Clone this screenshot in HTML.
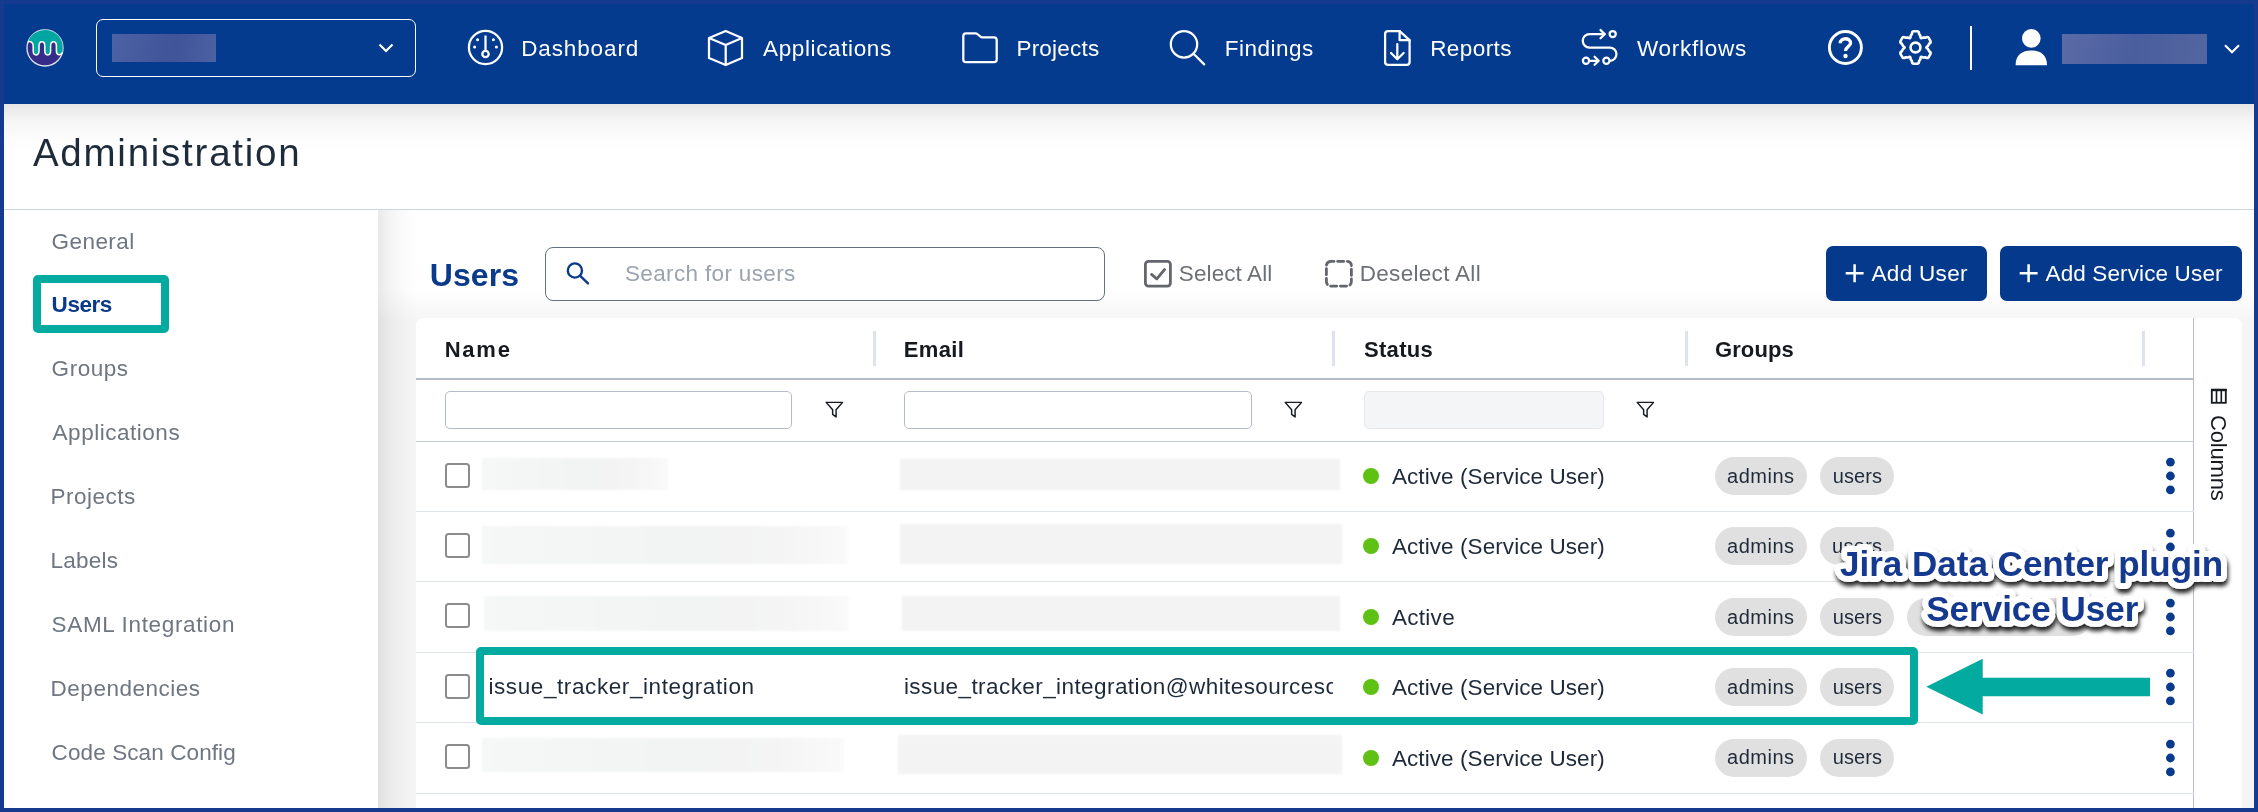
<!DOCTYPE html>
<html lang="en">
<head>
<meta charset="utf-8">
<title>Administration - Users</title>
<style>
*{box-sizing:border-box;margin:0;padding:0}
html,body{width:2258px;height:812px;overflow:hidden;background:#163a8e}
body{font-family:"Liberation Sans",sans-serif;color:#1e2a3a;position:relative}
.abs{position:absolute}
#frame{position:absolute;left:4px;top:4px;width:2250px;height:804px;background:#fff;overflow:hidden}
#nav{position:absolute;left:0;top:0;width:2250px;height:100px;background:#053b8e}
#nav svg{position:absolute;overflow:visible}
#page{position:absolute;left:-4px;top:-4px;width:2258px;height:812px;will-change:transform}
#page>div,#page>svg{position:absolute}
.tx{white-space:nowrap}
.cb{width:25px;height:25px;border:2.7px solid #8c8c8c;border-radius:3.5px;background:#fff}
.chip{height:38px;border-radius:19px;background:#e0e0e0}
.dot{width:16.4px;height:16.4px;border-radius:50%;background:#5ec113}
.sep{height:1px;background:#dfe3ee;left:416px;width:1778px}
.fin{height:38px;border:1px solid #b5bcc9;border-radius:5px;background:#fff}
.blur{background:#f3f3f4;filter:blur(1px)}
.teal{border:8px solid #02aaa0;border-radius:5px}
</style>
</head>
<body>
<div id="frame">
  <div id="nav">
    <!-- logo -->
    <svg style="left:22.2px;top:25px" width="38" height="38" viewBox="0 0 38 38">
      <circle cx="19" cy="19" r="18" fill="#352c8a" stroke="#e2e5f0" stroke-width="1.3"/>
      <path d="M2 13 A18 18 0 0 1 36.4 14.5 L36.4 22 C36.4 27.2 30.4 27.2 30.4 22 L30.4 17 C30.4 11.3 24.6 11.3 24.6 17 L24.6 22 C24.6 27.2 18.8 27.2 18.8 22 L18.8 17 C18.8 11.3 13 11.3 13 17 L13 22 C13 27.2 7.2 27.2 7.2 22 L7.2 17 C7.2 13.5 5 12 2 13 Z" fill="#00a7a2"/>
      <path d="M1.9 12.8 C5 12 7.2 13.5 7.2 17 L7.2 22 C7.2 27.2 13 27.2 13 22 L13 17 C13 11.3 18.8 11.3 18.8 17 L18.8 22 C18.8 27.2 24.6 27.2 24.6 22 L24.6 17 C24.6 11.3 30.4 11.3 30.4 17 L30.4 22 C30.4 26.5 35 27 36.3 23.5" fill="none" stroke="#fff" stroke-width="1.5"/>
    </svg>
    <!-- org dropdown -->
    <div class="abs" style="left:92px;top:15px;width:320px;height:58px;border:1.5px solid #fff;border-radius:7px"></div>
    <div class="abs" style="left:108px;top:30px;width:104px;height:28px;background:linear-gradient(100deg,#4d62a3,#3f5499 60%,#4d62a3)"></div>
    <svg style="left:374px;top:39px" width="16" height="10" viewBox="0 0 16 10"><path d="M1.5 1.5 L8 8 L14.5 1.5" fill="none" stroke="#fff" stroke-width="2.2"/></svg>

    <!-- dashboard -->
    <svg style="left:463px;top:25px" width="37" height="37" viewBox="0 0 37 37" fill="none" stroke="#fff" stroke-width="2.25">
      <circle cx="18.5" cy="18.5" r="16.6"/>
      <path d="M18.5 6.5 V21"/>
      <circle cx="18.5" cy="25" r="3.2"/>
      <g fill="#fff" stroke="none"><circle cx="10.6" cy="10.8" r="1.5"/><circle cx="26.4" cy="10.8" r="1.5"/><circle cx="7.6" cy="18" r="1.5"/><circle cx="29.4" cy="18" r="1.5"/></g>
    </svg>

    <!-- applications -->
    <svg style="left:703px;top:25px" width="37" height="37" viewBox="0 0 37 37" fill="none" stroke="#fff" stroke-width="2.25" stroke-linejoin="round">
      <path d="M18.7 2 L35 9 V29 L18.7 36 L2 29 V9 Z"/>
      <path d="M2 9 L18.7 16 L35 9 M18.7 16 V36"/>
    </svg>

    <!-- projects -->
    <svg style="left:957px;top:25px" width="38" height="37" viewBox="0 0 38 37" fill="none" stroke="#fff" stroke-width="2.25" stroke-linejoin="round">
      <path d="M2.3 7 Q2.3 4.3 5 4.3 H14.5 Q15.5 4.3 16.3 5 L19.5 7.6 Q20.3 8.3 21.3 8.3 H33 Q35.7 8.3 35.7 11 V30.5 Q35.7 33.2 33 33.2 H5 Q2.3 33.2 2.3 30.5 Z"/>
    </svg>

    <!-- findings -->
    <svg style="left:1163px;top:25px" width="40" height="38" viewBox="0 0 40 38" fill="none" stroke="#fff" stroke-width="2.25" stroke-linecap="round">
      <circle cx="17" cy="15.3" r="13.2"/>
      <path d="M26.5 24.8 L37.2 35.4"/>
    </svg>

    <!-- reports -->
    <svg style="left:1377px;top:25px" width="32" height="38" viewBox="0 0 32 38" fill="none" stroke="#fff" stroke-width="2.25" stroke-linejoin="round" stroke-linecap="round">
      <path d="M7 2.1 H18.6 L28.6 11.2 V33 Q28.6 35.9 25.7 35.9 H7 Q4.1 35.9 4.1 33 V5 Q4.1 2.1 7 2.1 Z"/>
      <path d="M18.6 2.1 V11.2 H28.6"/>
      <path d="M16.3 15 V30 M10 24 L16.3 30.2 L22.6 24"/>
    </svg>

    <!-- workflows -->
    <svg style="left:1576px;top:25px" width="40" height="38" viewBox="0 0 40 38" fill="none" stroke="#fff" stroke-width="2.25" stroke-linecap="round" stroke-linejoin="round">
      <circle cx="32.7" cy="5.1" r="3.1"/>
      <path d="M24.5 5.1 H9.5 A6.75 6.75 0 0 0 9.500 18.6 H29.7 A6.6 6.6 0 0 1 30 31.8"/>
      <path d="M20.5 1 L24.7 5.1 L20.5 9.2"/>
      <circle cx="6" cy="31.8" r="3.1"/>
      <circle cx="26.4" cy="31.8" r="3.1"/>
      <path d="M10 31.8 H18.5 M14.6 27.8 L18.7 31.8 L14.6 35.8"/>
    </svg>

    <!-- help -->
    <svg style="left:1823px;top:25px" width="37" height="37" viewBox="0 0 37 37" fill="none" stroke="#fff" stroke-width="2.9">
      <circle cx="18.4" cy="18.5" r="16"/>
      <path d="M13.3 14.2 C13.3 8.3 23.6 8.3 23.6 14 C23.6 17.6 18.5 17.8 18.5 22" stroke-width="3.3"/>
      <circle cx="18.5" cy="27" r="2.2" fill="#fff" stroke="none"/>
    </svg>
    <!-- gear -->
    <svg style="left:1893px;top:25px" width="37" height="37" viewBox="0 0 37 37" fill="none" stroke="#fff" stroke-width="2.6" stroke-linejoin="round">
      <path d="M13.58 6.90 L14.97 4.85 Q14.83 2.62 16.51 2.32 L20.49 2.32 Q22.17 2.62 22.03 4.85 L23.42 6.90 Q23.10 10.53 26.08 8.44 L28.56 8.62 Q30.42 7.38 31.52 8.69 L33.50 12.13 Q34.09 13.73 32.09 14.73 L31.01 16.96 Q27.70 18.50 31.01 20.04 L32.09 22.27 Q34.09 23.27 33.50 24.87 L31.52 28.31 Q30.42 29.62 28.56 28.38 L26.08 28.56 Q23.10 26.47 23.42 30.10 L22.03 32.15 Q22.17 34.38 20.49 34.68 L16.51 34.68 Q14.83 34.38 14.97 32.15 L13.58 30.10 Q13.90 26.47 10.92 28.56 L8.44 28.38 Q6.58 29.62 5.48 28.31 L3.50 24.87 Q2.91 23.27 4.91 22.27 L5.99 20.04 Q9.30 18.50 5.99 16.96 L4.91 14.73 Q2.91 13.73 3.50 12.13 L5.48 8.69 Q6.58 7.38 8.44 8.62 L10.92 8.44 Q13.90 10.53 13.58 6.90 Z"/>
      <circle cx="18.5" cy="18.5" r="4.9"/>
    </svg>
    <div class="abs" style="left:1966px;top:22px;width:2.2px;height:44px;background:#fff"></div>
    <!-- user -->
    <svg style="left:2010px;top:24px" width="36" height="40" viewBox="0 0 36 40" fill="#fff">
      <circle cx="17.3" cy="10.4" r="9.3"/>
      <path d="M1.6 37.2 C1.6 27 8 22.6 17.3 22.6 C26.6 22.6 33 27 33 37.2 Z"/>
    </svg>
    <div class="abs" style="left:2058px;top:30px;width:145px;height:30px;background:linear-gradient(100deg,#5a6ba6,#4a5d9e 50%,#54669f)"></div>
    <svg style="left:2220px;top:40px" width="16" height="10" viewBox="0 0 16 10"><path d="M1 1.2 L8 8.2 L15 1.2" fill="none" stroke="#fff" stroke-width="2.2"/></svg>
  </div>

  <div id="page">
<div style="left:4px;top:104px;width:2250px;height:48px;background:linear-gradient(#e6e6e6,#f5f5f5 35%,#fdfdfd 75%,#fff)"></div>
<div style="left:4px;top:209px;width:2250px;height:1px;background:#cdd4db"></div>
<div style="left:378px;top:210px;width:1876px;height:598px;background:#f5f5f5"></div>
<div style="left:378px;top:210px;width:1876px;height:108px;background:linear-gradient(#fff 72%,#f6f6f6)"></div>
<div style="left:378px;top:210px;width:40px;height:598px;background:linear-gradient(90deg,rgba(0,0,0,.085),rgba(0,0,0,.045) 30%,rgba(0,0,0,.015) 65%,rgba(0,0,0,0))"></div>
<div class="teal" style="left:33px;top:275px;width:136px;height:57.5px"></div>
<div style="left:545px;top:247px;width:560px;height:54px;border:1.3px solid #66717f;border-radius:8px;background:#fff"></div>
<svg style="left:564px;top:260px" width="28" height="28" viewBox="0 0 28 28" fill="none" stroke="#0a3a8c" stroke-width="2.4" stroke-linecap="round"><circle cx="10.9" cy="10.5" r="7.1"/><path d="M16.2 15.8 L24 23.4"/></svg>
<svg style="left:1143px;top:259px" width="30" height="30" viewBox="0 0 30 30" fill="none" stroke="#63666d" stroke-width="2.8" stroke-linecap="round" stroke-linejoin="round"><rect x="2.4" y="2.3" width="25" height="24.8" rx="3"/><path d="M8.5 15.4 L13.8 19.8 L21.6 10.5"/></svg>
<svg style="left:1324px;top:259px" width="30" height="30" viewBox="0 0 30 30" fill="none" stroke="#63666d" stroke-width="2.8" stroke-linecap="round"><rect x="2.4" y="2.3" width="25" height="24.8" rx="4.5" stroke-dasharray="6.2 3.6" stroke-dashoffset="3.1"/></svg>
<div style="left:1826px;top:246px;width:161px;height:55px;border-radius:7px;background:#05398b"></div>
<div style="left:2000px;top:246px;width:242px;height:55px;border-radius:7px;background:#05398b"></div>
<svg style="left:1845px;top:264px" width="19" height="19" viewBox="0 0 19 19" stroke="#fff" stroke-width="2.5" fill="none"><path d="M9.6 0.3 V18.3 M0.7 9.3 H18.6"/></svg>
<svg style="left:2019px;top:264px" width="19" height="19" viewBox="0 0 19 19" stroke="#fff" stroke-width="2.5" fill="none"><path d="M9.6 0.3 V18.3 M0.7 9.3 H18.6"/></svg>
<div style="left:416px;top:318px;width:1826px;height:500px;border-radius:7px;background:#fff"></div>
<div style="left:2193px;top:318px;width:1.3px;height:500px;background:#b9bdc6"></div>
<div style="left:872.7px;top:331.3px;width:3.2px;height:35.2px;background:#dde2ec"></div>
<div style="left:1331.7px;top:331.3px;width:3.2px;height:35.2px;background:#dde2ec"></div>
<div style="left:1684.7px;top:331.3px;width:3.2px;height:35.2px;background:#dde2ec"></div>
<div style="left:2141.7px;top:331.3px;width:3.2px;height:35.2px;background:#dde2ec"></div>
<div style="left:416px;top:378px;width:1778px;height:2px;background:#b4bac6"></div>
<div style="left:416px;top:441px;width:1778px;height:1px;background:#c3c8d2"></div>
<div class="fin" style="left:445px;top:391px;width:347px"></div>
<div class="fin" style="left:904px;top:391px;width:348px"></div>
<div class="fin" style="left:1364px;top:391px;width:240px;background:#f4f5f7;border-color:#e6e8ec"></div>
<svg style="left:825px;top:399.5px" width="20" height="20" viewBox="0 0 22 22" fill="none" stroke="#161a1f" stroke-width="1.6" stroke-linejoin="round"><path d="M1.3 2.6 H19.3 L12.2 10.8 V18.6 L8.4 15.8 V10.8 Z"/></svg>
<svg style="left:1284px;top:399.5px" width="20" height="20" viewBox="0 0 22 22" fill="none" stroke="#161a1f" stroke-width="1.6" stroke-linejoin="round"><path d="M1.3 2.6 H19.3 L12.2 10.8 V18.6 L8.4 15.8 V10.8 Z"/></svg>
<svg style="left:1636px;top:399.5px" width="20" height="20" viewBox="0 0 22 22" fill="none" stroke="#161a1f" stroke-width="1.6" stroke-linejoin="round"><path d="M1.3 2.6 H19.3 L12.2 10.8 V18.6 L8.4 15.8 V10.8 Z"/></svg>
<div class="sep" style="top:511px"></div>
<div class="sep" style="top:581px"></div>
<div class="sep" style="top:652px"></div>
<div class="sep" style="top:722px"></div>
<div class="sep" style="top:793px"></div>
<div class="cb" style="left:445px;top:462.5px"></div>
<div class="blur" style="left:482.0px;top:458.2px;width:186.0px;height:31.6px;background:linear-gradient(90deg,#f6f7f7,#f2f3f3 55%,#f4f4f4 80%,#fafafa)"></div>
<div class="blur" style="left:899.8px;top:459.0px;width:440.2px;height:30.8px"></div>
<div class="dot" style="left:1362.6px;top:467.8px"></div>
<div class="chip" style="left:1715px;top:457.0px;width:92px"></div>
<div class="chip" style="left:1820px;top:457.0px;width:74px"></div>
<svg style="left:2160px;top:456.2px" width="20" height="40" viewBox="0 0 20 40" fill="#0a3a8c"><circle cx="10.4" cy="6.1" r="4.4"/><circle cx="10.4" cy="20" r="4.4"/><circle cx="10.4" cy="33.9" r="4.4"/></svg>
<div class="cb" style="left:445px;top:532.8px"></div>
<div class="blur" style="left:482.0px;top:526.0px;width:366.0px;height:38.0px;background:linear-gradient(90deg,#f6f7f7,#f2f3f3 55%,#f4f4f4 80%,#fafafa)"></div>
<div class="blur" style="left:899.8px;top:524.0px;width:442.2px;height:40.0px"></div>
<div class="dot" style="left:1362.6px;top:538.1px"></div>
<div class="chip" style="left:1715px;top:527.3px;width:92px"></div>
<div class="chip" style="left:1820px;top:527.3px;width:74px"></div>
<svg style="left:2160px;top:526.5px" width="20" height="40" viewBox="0 0 20 40" fill="#0a3a8c"><circle cx="10.4" cy="6.1" r="4.4"/><circle cx="10.4" cy="20" r="4.4"/><circle cx="10.4" cy="33.9" r="4.4"/></svg>
<div class="cb" style="left:445px;top:603.3px"></div>
<div class="blur" style="left:483.8px;top:595.6px;width:365.6px;height:35.8px;background:linear-gradient(90deg,#f6f7f7,#f2f3f3 55%,#f4f4f4 80%,#fafafa)"></div>
<div class="blur" style="left:901.6px;top:595.6px;width:438.4px;height:35.8px"></div>
<div class="dot" style="left:1362.6px;top:608.6px"></div>
<div class="chip" style="left:1715px;top:597.8px;width:92px"></div>
<div class="chip" style="left:1820px;top:597.8px;width:74px"></div>
<svg style="left:2160px;top:597.0px" width="20" height="40" viewBox="0 0 20 40" fill="#0a3a8c"><circle cx="10.4" cy="6.1" r="4.4"/><circle cx="10.4" cy="20" r="4.4"/><circle cx="10.4" cy="33.9" r="4.4"/></svg>
<div class="cb" style="left:445px;top:673.7px"></div>
<div class="dot" style="left:1362.6px;top:679.0px"></div>
<div class="chip" style="left:1715px;top:668.2px;width:92px"></div>
<div class="chip" style="left:1820px;top:668.2px;width:74px"></div>
<svg style="left:2160px;top:667.4px" width="20" height="40" viewBox="0 0 20 40" fill="#0a3a8c"><circle cx="10.4" cy="6.1" r="4.4"/><circle cx="10.4" cy="20" r="4.4"/><circle cx="10.4" cy="33.9" r="4.4"/></svg>
<div class="cb" style="left:445px;top:744.2px"></div>
<div class="blur" style="left:482.0px;top:738.2px;width:361.5px;height:33.9px;background:linear-gradient(90deg,#f6f7f7,#f2f3f3 55%,#f4f4f4 80%,#fafafa)"></div>
<div class="blur" style="left:898.0px;top:735.0px;width:444.0px;height:38.5px"></div>
<div class="dot" style="left:1362.6px;top:749.5px"></div>
<div class="chip" style="left:1715px;top:738.7px;width:92px"></div>
<div class="chip" style="left:1820px;top:738.7px;width:74px"></div>
<svg style="left:2160px;top:737.9px" width="20" height="40" viewBox="0 0 20 40" fill="#0a3a8c"><circle cx="10.4" cy="6.1" r="4.4"/><circle cx="10.4" cy="20" r="4.4"/><circle cx="10.4" cy="33.9" r="4.4"/></svg>
<div class="chip" style="left:1907px;top:598px;width:185px"></div>
<div style="left:900px;top:670px;width:433.3px;height:36px;overflow:hidden"><div class="tx" id="em" style="position:absolute;left:3.9px;top:6.3px;font-size:22.5px;line-height:22.5px;letter-spacing:0.420px">issue_tracker_integration@whitesourcesoftware.com</div></div>
<svg style="left:2210px;top:388px" width="18" height="17" viewBox="0 0 18 17" fill="none" stroke="#161a1f" stroke-width="1.8"><rect x="1.8" y="1.8" width="14" height="13"/><path d="M6.5 2 V15 M11.3 2 V15" stroke-width="1.6"/><path d="M1 2 H16.7" stroke-width="2.4"/></svg>
<div class="tx" id="col" style="left:2207px;top:415.2px;font-size:22px;line-height:22px;letter-spacing:-0.170px;color:#161a1f;writing-mode:vertical-rl">Columns</div>
<div class="tx" id="n1" style="left:521.20px;top:37.55px;font-size:22.5px;line-height:22.5px;font-weight:400;color:#fff;letter-spacing:0.875px">Dashboard</div>
<div class="tx" id="n2" style="left:763.10px;top:37.55px;font-size:22.5px;line-height:22.5px;font-weight:400;color:#fff;letter-spacing:0.612px">Applications</div>
<div class="tx" id="n3" style="left:1016.40px;top:37.55px;font-size:22.5px;line-height:22.5px;font-weight:400;color:#fff;letter-spacing:0.238px">Projects</div>
<div class="tx" id="n4" style="left:1224.80px;top:37.55px;font-size:22.5px;line-height:22.5px;font-weight:400;color:#fff;letter-spacing:0.500px">Findings</div>
<div class="tx" id="n5" style="left:1430.20px;top:37.55px;font-size:22.5px;line-height:22.5px;font-weight:400;color:#fff;letter-spacing:0.427px">Reports</div>
<div class="tx" id="n6" style="left:1637.00px;top:37.55px;font-size:22.5px;line-height:22.5px;font-weight:400;color:#fff;letter-spacing:0.750px">Workflows</div>
<div class="tx" id="title" style="left:32.90px;top:134.41px;font-size:38.5px;line-height:38.5px;font-weight:400;color:#1d2b3a;letter-spacing:1.757px">Administration</div>
<div class="tx" id="s1" style="left:51.60px;top:230.65px;font-size:22.5px;line-height:22.5px;font-weight:400;color:#6e7681;letter-spacing:0.429px">General</div>
<div class="tx" id="s2" style="left:51.60px;top:294.35px;font-size:22.5px;line-height:22.5px;font-weight:700;color:#0a3a8c;letter-spacing:-0.450px">Users</div>
<div class="tx" id="s3" style="left:51.60px;top:358.25px;font-size:22.5px;line-height:22.5px;font-weight:400;color:#6e7681;letter-spacing:0.540px">Groups</div>
<div class="tx" id="s4" style="left:52.60px;top:422.25px;font-size:22.5px;line-height:22.5px;font-weight:400;color:#6e7681;letter-spacing:0.521px">Applications</div>
<div class="tx" id="s5" style="left:50.60px;top:486.25px;font-size:22.5px;line-height:22.5px;font-weight:400;color:#6e7681;letter-spacing:0.500px">Projects</div>
<div class="tx" id="s6" style="left:50.60px;top:550.25px;font-size:22.5px;line-height:22.5px;font-weight:400;color:#6e7681;letter-spacing:0.220px">Labels</div>
<div class="tx" id="s7" style="left:51.60px;top:614.25px;font-size:22.5px;line-height:22.5px;font-weight:400;color:#6e7681;letter-spacing:0.657px">SAML Integration</div>
<div class="tx" id="s8" style="left:50.60px;top:678.25px;font-size:22.5px;line-height:22.5px;font-weight:400;color:#6e7681;letter-spacing:0.507px">Dependencies</div>
<div class="tx" id="s9" style="left:51.60px;top:742.25px;font-size:22.5px;line-height:22.5px;font-weight:400;color:#6e7681;letter-spacing:0.100px">Code Scan Config</div>
<div class="tx" id="h" style="left:429.80px;top:259.21px;font-size:32px;line-height:32px;font-weight:700;color:#0a3a8c;letter-spacing:0.050px">Users</div>
<div class="tx" id="ph" style="left:625.00px;top:263.35px;font-size:22.5px;line-height:22.5px;font-weight:400;color:#9aa3b0;letter-spacing:0.343px">Search for users</div>
<div class="tx" id="sa" style="left:1178.80px;top:262.85px;font-size:22.5px;line-height:22.5px;font-weight:400;color:#6d7077;letter-spacing:0.105px">Select All</div>
<div class="tx" id="da" style="left:1359.70px;top:262.85px;font-size:22.5px;line-height:22.5px;font-weight:400;color:#6d7077;letter-spacing:0.311px">Deselect All</div>
<div class="tx" id="b1" style="left:1871.50px;top:262.85px;font-size:22.5px;line-height:22.5px;font-weight:400;color:#fff;letter-spacing:0.307px">Add User</div>
<div class="tx" id="b2" style="left:2045.50px;top:262.85px;font-size:22.5px;line-height:22.5px;font-weight:400;color:#fff;letter-spacing:0.130px">Add Service User</div>
<div class="tx" id="c1" style="left:444.70px;top:339.18px;font-size:22px;line-height:22px;font-weight:700;color:#161a1f;letter-spacing:1.772px">Name</div>
<div class="tx" id="c2" style="left:903.70px;top:339.18px;font-size:22px;line-height:22px;font-weight:700;color:#161a1f;letter-spacing:0.400px">Email</div>
<div class="tx" id="c3" style="left:1364.00px;top:339.18px;font-size:22px;line-height:22px;font-weight:700;color:#161a1f;letter-spacing:0.300px">Status</div>
<div class="tx" id="c4" style="left:1715.00px;top:339.18px;font-size:22px;line-height:22px;font-weight:700;color:#161a1f;letter-spacing:0.100px">Groups</div>
<div class="tx" id="nm" style="left:488.40px;top:676.35px;font-size:22.5px;line-height:22.5px;font-weight:400;color:#1e2a3a;letter-spacing:0.594px">issue_tracker_integration</div>
<div class="tx" id="st0" style="left:1391.90px;top:465.85px;font-size:22.5px;line-height:22.5px;font-weight:400;color:#1e2a3a;letter-spacing:0.080px">Active (Service User)</div>
<div class="tx" id="ga0" style="left:1727.10px;top:465.77px;font-size:20px;line-height:20px;font-weight:400;color:#1e2a3a;letter-spacing:0.500px">admins</div>
<div class="tx" id="gu0" style="left:1832.80px;top:465.77px;font-size:20px;line-height:20px;font-weight:400;color:#1e2a3a;letter-spacing:0.100px">users</div>
<div class="tx" id="st1" style="left:1391.90px;top:536.15px;font-size:22.5px;line-height:22.5px;font-weight:400;color:#1e2a3a;letter-spacing:0.080px">Active (Service User)</div>
<div class="tx" id="ga1" style="left:1727.10px;top:536.07px;font-size:20px;line-height:20px;font-weight:400;color:#1e2a3a;letter-spacing:0.500px">admins</div>
<div class="tx" id="gu1" style="left:1832.00px;top:536.07px;font-size:20px;line-height:20px;font-weight:400;color:#1e2a3a;letter-spacing:0.300px">users</div>
<div class="tx" id="st2" style="left:1391.90px;top:606.65px;font-size:22.5px;line-height:22.5px;font-weight:400;color:#1e2a3a;letter-spacing:0.300px">Active</div>
<div class="tx" id="ga2" style="left:1727.10px;top:606.57px;font-size:20px;line-height:20px;font-weight:400;color:#1e2a3a;letter-spacing:0.500px">admins</div>
<div class="tx" id="gu2" style="left:1832.80px;top:606.57px;font-size:20px;line-height:20px;font-weight:400;color:#1e2a3a;letter-spacing:0.100px">users</div>
<div class="tx" id="st3" style="left:1391.90px;top:677.05px;font-size:22.5px;line-height:22.5px;font-weight:400;color:#1e2a3a;letter-spacing:0.080px">Active (Service User)</div>
<div class="tx" id="ga3" style="left:1727.10px;top:676.97px;font-size:20px;line-height:20px;font-weight:400;color:#1e2a3a;letter-spacing:0.500px">admins</div>
<div class="tx" id="gu3" style="left:1832.80px;top:676.97px;font-size:20px;line-height:20px;font-weight:400;color:#1e2a3a;letter-spacing:0.100px">users</div>
<div class="tx" id="st4" style="left:1391.90px;top:747.55px;font-size:22.5px;line-height:22.5px;font-weight:400;color:#1e2a3a;letter-spacing:0.080px">Active (Service User)</div>
<div class="tx" id="ga4" style="left:1727.10px;top:747.47px;font-size:20px;line-height:20px;font-weight:400;color:#1e2a3a;letter-spacing:0.500px">admins</div>
<div class="tx" id="gu4" style="left:1832.80px;top:747.47px;font-size:20px;line-height:20px;font-weight:400;color:#1e2a3a;letter-spacing:0.100px">users</div>
<div class="teal" style="left:476px;top:647px;width:1442px;height:78px"></div>
<svg style="left:1920px;top:650px" width="240" height="74" viewBox="0 0 240 74"><path d="M6.3 36.7 L62.7 8.8 V27.7 H230 V46.2 H62.7 V64.6 Z" fill="#02aaa0"/></svg>
<svg style="left:1800px;top:520px" width="458" height="130" viewBox="0 0 458 130" font-family="'Liberation Sans',sans-serif" font-weight="700" font-size="35px" text-anchor="middle">
<defs><filter id="sh" x="-5%" y="-20%" width="110%" height="150%"><feDropShadow dx="1.2" dy="4.2" stdDeviation="2.1" flood-color="#000" flood-opacity=".85"/></filter></defs>
<g filter="url(#sh)" fill="#fff" stroke="#fff" stroke-width="12" stroke-linejoin="round"><text x="231.6" y="56.2">Jira Data Center plugin</text><text x="232.3" y="100.6">Service User</text></g>
<g fill="#14398f"><text x="231.6" y="56.2">Jira Data Center plugin</text><text x="232.3" y="100.6">Service User</text></g>
</svg>
  </div>
</div>
</body>
</html>
